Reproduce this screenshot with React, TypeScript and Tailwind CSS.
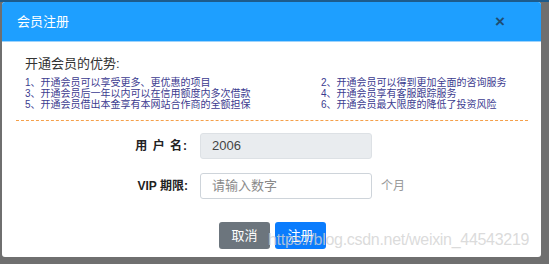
import React from "react";

const perks = [
  "1、开通会员可以享受更多、更优惠的项目",
  "2、开通会员可以得到更加全面的咨询服务",
  "3、开通会员后一年以内可以在信用额度内多次借款",
  "4、开通会员享有客服跟踪服务",
  "5、开通会员借出本金享有本网站合作商的全额担保",
  "6、开通会员最大限度的降低了投资风险",
];

export default function App() {
  return (
    <div
      className="relative w-[549px] h-[264px] overflow-hidden bg-[#6f6f6f] pt-[2px] pl-[2px] pr-[8px] pb-[7px]"
      style={{ fontFamily: '"Liberation Sans", "Noto Sans CJK SC", sans-serif' }}
    >
      <div className="absolute left-0 top-0 w-full h-[2px] bg-[#1d5b8c]" />
      <div className="flex flex-col h-full bg-white rounded-[3px] overflow-hidden">
        {/* header */}
        <div className="flex items-center justify-between h-[40px] bg-[#1e9fff] border-b border-[#9fd3fb] pl-[15px] pr-[36px]">
          <span className="text-white text-[13px]">会员注册</span>
          <span className="text-[#1f4d72] text-[17px] font-bold leading-none">×</span>
        </div>

        {/* perks */}
        <div className="px-[14px] pt-[14px]">
          <div className="pl-[9px] text-[13px] text-[#333] leading-[16px]">开通会员的优势:</div>
          <div className="grid grid-cols-[296px_1fr] pl-[9px] mt-[5px] text-[10px] leading-[11px] text-[#3b3b8f]">
            {perks.map((p) => (
              <div key={p}>{p}</div>
            ))}
          </div>
          <div className="mt-[10px] border-t border-dashed border-[#f5a04a] w-[512px]" />
        </div>

        {/* form */}
        <div className="flex flex-col gap-[14px] mt-[12px]">
          <div className="flex items-center">
            <div className="w-[198px] text-right pr-[12px] text-[12px] font-bold text-[#222] tracking-[1px]">用 户 名:</div>
            <div className="w-[172px] h-[26px] rounded-[3px] bg-[#e9ecef] border border-[#dde1e5] flex items-center pl-[11px] text-[13px] text-[#444]">
              2006
            </div>
          </div>
          <div className="flex items-center">
            <div className="w-[198px] text-right pr-[12px] text-[12px] font-bold text-[#222]">VIP 期限:</div>
            <div className="w-[172px] h-[26px] rounded-[3px] bg-white border border-[#ced4da] flex items-center pl-[11px] text-[13px] text-[#8a8a8a]">
              请输入数字
            </div>
            <span className="ml-[9px] text-[12px] text-[#999]">个月</span>
          </div>
        </div>

        {/* buttons */}
        <div className="flex gap-[5px] pl-[217px] mt-[23px]">
          <button className="w-[51px] h-[27px] rounded-[3px] bg-[#6c757d] text-white text-[13px]">取消</button>
          <button className="w-[51px] h-[27px] rounded-[3px] bg-[#0a7cfd] text-white text-[13px]">注册</button>
        </div>
      </div>

      <div className="absolute left-[268px] top-[228px] text-[16px] text-[#d2d2d2]/80 tracking-[-0.3px] whitespace-nowrap">
        https://blog.csdn.net/weixin_44543219
      </div>
    </div>
  );
}
